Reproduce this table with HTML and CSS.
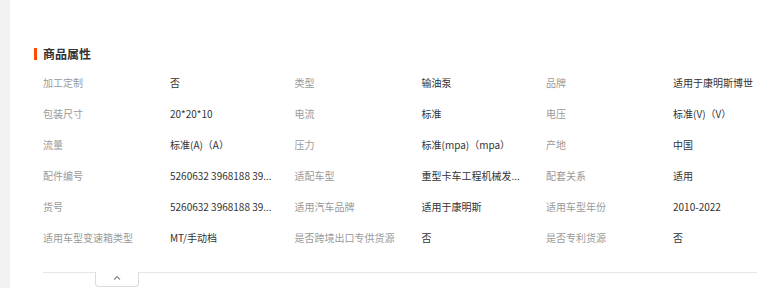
FILE: index.html
```html
<!DOCTYPE html>
<html lang="zh-CN">
<head>
<meta charset="utf-8">
<title>商品属性</title>
<link rel="stylesheet" href="styles.css">
</head>
<body>
<div class="page">
  <div class="side"></div>
  <main class="main">
    <h2 class="title">商品属性</h2>
    <div class="attrs">
      <span class="k">加工定制</span><span class="v">否</span>
      <span class="k">类型</span><span class="v">输油泵</span>
      <span class="k">品牌</span><span class="v">适用于康明斯博世</span>

      <span class="k">包装尺寸</span><span class="v">20*20*10</span>
      <span class="k">电流</span><span class="v">标准</span>
      <span class="k">电压</span><span class="v">标准(V)（V）</span>

      <span class="k">流量</span><span class="v">标准(A)（A）</span>
      <span class="k">压力</span><span class="v">标准(mpa)（mpa）</span>
      <span class="k">产地</span><span class="v">中国</span>

      <span class="k">配件编号</span><span class="v" title="5260632 3968188 3937690">5260632 3968188 39...</span>
      <span class="k">适配车型</span><span class="v" title="重型卡车工程机械发动机">重型卡车工程机械发...</span>
      <span class="k">配套关系</span><span class="v">适用</span>

      <span class="k">货号</span><span class="v" title="5260632 3968188 3937690">5260632 3968188 39...</span>
      <span class="k">适用汽车品牌</span><span class="v">适用于康明斯</span>
      <span class="k">适用车型年份</span><span class="v">2010-2022</span>

      <span class="k">适用车型变速箱类型</span><span class="v">MT/手动档</span>
      <span class="k">是否跨境出口专供货源</span><span class="v">否</span>
      <span class="k">是否专利货源</span><span class="v">否</span>
    </div>
    <div class="foot">
      <button class="toggle" type="button" aria-label="收起">
        <svg width="8" height="5" viewBox="0 0 8 5"><polyline points="1,4.5 4,1.5 7,4.5" fill="none" stroke="#8a8a8a" stroke-width="1.2"/></svg>
      </button>
    </div>
  </main>
</div>
</body>
</html>
```

FILE: styles.css
```css
html, body {
  margin: 0;
  padding: 0;
  background: #fff;
  overflow: hidden;
}
body {
  font-family: "Noto Sans CJK SC", "Noto Sans", sans-serif;
  color: #333;
}
.page {
  display: flex;
  width: 100%;
  height: 288px;
}
.side {
  width: 10px;
  flex: none;
  background: #f2f2f2;
}
.main {
  flex: 1;
  min-width: 0;
  padding: 48px 1px 0 24px;
}
.title {
  margin: 0;
  display: flex;
  align-items: center;
  gap: 6px;
  height: 12px;
  font-size: 12px;
  line-height: 12px;
  font-weight: 700;
  color: #333;
}
.title::before {
  content: "";
  width: 3px;
  height: 12px;
  background: #ff4a00;
}
.attrs {
  margin: 7px 0 0 9px;
  display: grid;
  grid-template-columns: 127px 124.5px 127px 124.5px 127px minmax(0, 1fr);
  grid-auto-rows: 31px;
  font-size: 10px;
  line-height: 31px;
}
.k {
  color: #9a9a9a;
  white-space: nowrap;
}
.v {
  color: #333;
  white-space: nowrap;
}
.foot {
  margin: 19px 0 0 9px;
  border-top: 1px solid #e6e6e6;
}
.toggle {
  display: flex;
  align-items: flex-start;
  justify-content: center;
  margin: -1px 0 0 52px;
  padding: 3px 0 0;
  width: 44px;
  height: 15px;
  background: #fff;
  border: 1px solid #dcdcdc;
  border-top: none;
  border-radius: 0 0 4px 4px;
  box-sizing: border-box;
}
.toggle svg {
  display: block;
}
```
